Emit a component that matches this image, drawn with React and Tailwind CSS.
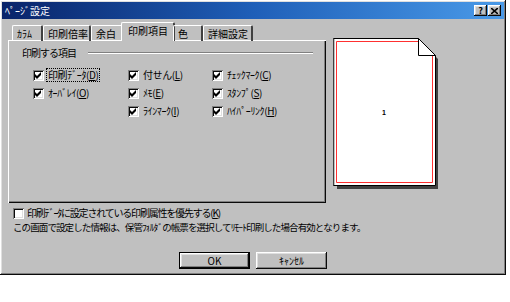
import React from "react";

const FONT = { fontFamily: '"Noto Sans CJK JP", "Liberation Sans", sans-serif' };

const raised = "shadow-[inset_-1px_-1px_#0a0a0a,inset_1px_1px_#ffffff,inset_-2px_-2px_#808080,inset_2px_2px_#dfdfdf]";
const sunken = "shadow-[inset_1px_1px_#808080,inset_-1px_-1px_#ffffff,inset_2px_2px_#0a0a0a,inset_-2px_-2px_#dfdfdf]";

const Mnemonic = ({ text, k }) => {
	// text like "印刷ﾃﾞｰﾀ" and key letter "D"
	return (
		<>
			{text}(<span className="underline underline-offset-1">{k}</span>)
		</>
	);
};

const CheckBox = ({ checked }) => (
	<span className={`flex items-center justify-center w-[11px] h-[11px] bg-white shrink-0 ${sunken}`}>
		{checked && (
			<svg width="7" height="7" viewBox="0 0 7 7">
				<path d="M0 2 L2 4 L6 0 L6 3 L2 7 L0 5 Z" fill="#000" />
			</svg>
		)}
	</span>
);

const Item = ({ text, k, focus }) => (
	<div className="flex items-center h-[18px]">
		<CheckBox checked />
		<span
			className={`ml-[2px] leading-none px-[1px] py-[1px] border tracking-[-0.4px] ${
				focus ? "border-dotted border-black" : "border-transparent"
			}`}
		>
			<Mnemonic text={text} k={k} />
		</span>
	</div>
);

const tabs = [
	{ label: "ｶﾗﾑ", w: "w-[31px]" },
	{ label: "印刷倍率", w: "w-[48px]" },
	{ label: "余白", w: "w-[32px]" },
	{ label: "印刷項目", w: "w-[54px]", active: true },
	{ label: "色", w: "w-[30px]" },
	{ label: "詳細設定", w: "w-[50px]" },
];

const PagePreview = () => (
	<svg width="110" height="153" viewBox="0 0 110 153">
		{/* shadow */}
		<polygon points="5,6 90,6 106,22 106,152 5,152" fill="#404040" />
		{/* page */}
		<polygon points="1.5,1.5 86.5,1.5 103.5,18.5 103.5,148.5 1.5,148.5" fill="#fff" stroke="#000" strokeWidth="1" />
		<line x1="2" y1="2" x2="2" y2="148" stroke="#808080" />
		{/* margin */}
		<path d="M86 4.5 H4.5 V145.5 H100.5 V19" fill="none" stroke="#ff3030" strokeWidth="1" />
		{/* fold */}
		<polygon points="86.5,1.5 86.5,18.5 103.5,18.5" fill="#fff" stroke="#000" strokeWidth="1" />
		<text x="52" y="78" fontSize="7" fontWeight="bold" textAnchor="middle" fontFamily="Liberation Sans, sans-serif">
			1
		</text>
	</svg>
);

const TitleButton = ({ children }) => (
	<span className={`flex items-center justify-center w-[13px] h-[11px] bg-[#c0c0c0] text-[9px] font-bold leading-none ${raised}`}>
		{children}
	</span>
);

export default function App() {
	return (
		<div className="w-[510px] h-[302px] bg-white text-black text-[10px]" style={FONT}>
			<div className={`w-[506px] h-[275px] bg-[#c0c0c0] flex flex-col p-[2px] ${raised}`}>
				{/* title bar */}
				<div className="h-[17px] flex items-center justify-between bg-linear-to-r from-[#0a246a] via-[#1f5fb8] to-[#4a9ae8] pl-[3px] pr-[3px]">
					<span className="text-white text-[10px] leading-none">ﾍﾟｰｼﾞ設定</span>
					<div className="flex gap-[1px]">
						<TitleButton>?</TitleButton>
						<TitleButton>
							<svg width="7" height="6" viewBox="0 0 7 6">
								<path d="M0 0 L7 6 M7 0 L0 6" stroke="#000" strokeWidth="1.6" />
							</svg>
						</TitleButton>
					</div>
				</div>

				<div className="flex pl-[6px] mt-[3px]">
					{/* left: tabs + panel */}
					<div className="w-[318px] flex flex-col">
						<div className="flex items-end h-[19px] pl-[4px] relative z-10">
							{tabs.map((t) => (
								<div
									key={t.label}
									className={`${t.w} ${
										t.active ? "h-[19px] -mx-[2px] bg-[#c0c0c0] pt-[3px] pl-[6px]" : "h-[16px] pt-[3px] pl-[4px]"
									} rounded-t-[2px] border-t border-l border-white border-r-[2px] border-r-[#404040] leading-none whitespace-nowrap`}
								>
									{t.label}
								</div>
							))}
						</div>
						<div className="h-[163px] -mt-[1px] shadow-[inset_1px_1px_#ffffff,inset_-1px_-1px_#0a0a0a,inset_-2px_-2px_#808080] pt-[8px] pl-[14px] pr-[13px]">
							<div className="flex items-center gap-[12px] h-[10px]">
								<span className="leading-none whitespace-nowrap tracking-[-1px]">印刷する項目</span>
								<div className="flex-1 h-[2px] border-t border-[#808080] border-b border-b-white" />
							</div>
							<div className="grid grid-cols-[95px_84px_auto] mt-[8px] pl-[11px]">
								<div className="flex flex-col">
									<Item text="印刷ﾃﾞｰﾀ" k="D" focus />
									<Item text="ｵｰﾊﾞﾚｲ" k="O" />
								</div>
								<div className="flex flex-col">
									<Item text="付せん" k="L" />
									<Item text="ﾒﾓ" k="E" />
									<Item text="ﾗｲﾝﾏｰｸ" k="I" />
								</div>
								<div className="flex flex-col">
									<Item text="ﾁｪｯｸﾏｰｸ" k="C" />
									<Item text="ｽﾀﾝﾌﾟ" k="S" />
									<Item text="ﾊｲﾊﾟｰﾘﾝｸ" k="H" />
								</div>
							</div>
						</div>
					</div>
					{/* right: preview */}
					<div className="ml-[6px] mt-[15px]">
						<PagePreview />
					</div>
				</div>

				<div className="flex items-center gap-[3px] pl-[11px] mt-[4px] h-[12px]">
					<CheckBox />
					<span className="leading-none whitespace-nowrap tracking-[-1.2px]">
						<Mnemonic text="印刷ﾃﾞｰﾀに設定されている印刷属性を優先する" k="K" />
					</span>
				</div>
				<div className="pl-[11px] mt-[4px] h-[12px] leading-none whitespace-nowrap text-[9.5px] tracking-[-0.9px]">
					この画面で設定した情報は、保管ﾌｫﾙﾀﾞの帳票を選択してﾘﾓｰﾄ印刷した場合有効となります。
				</div>

				<div className="flex justify-center gap-[6px] mt-[17px]">
					<button className="w-[71px] h-[17px] border border-black bg-[#c0c0c0] flex items-center justify-center">
						<span className={`w-full h-full flex items-center justify-center leading-none ${raised}`}>OK</span>
					</button>
					<button className={`w-[71px] h-[17px] bg-[#c0c0c0] flex items-center justify-center leading-none ${raised}`}>
						ｷｬﾝｾﾙ
					</button>
				</div>
			</div>
		</div>
	);
}
